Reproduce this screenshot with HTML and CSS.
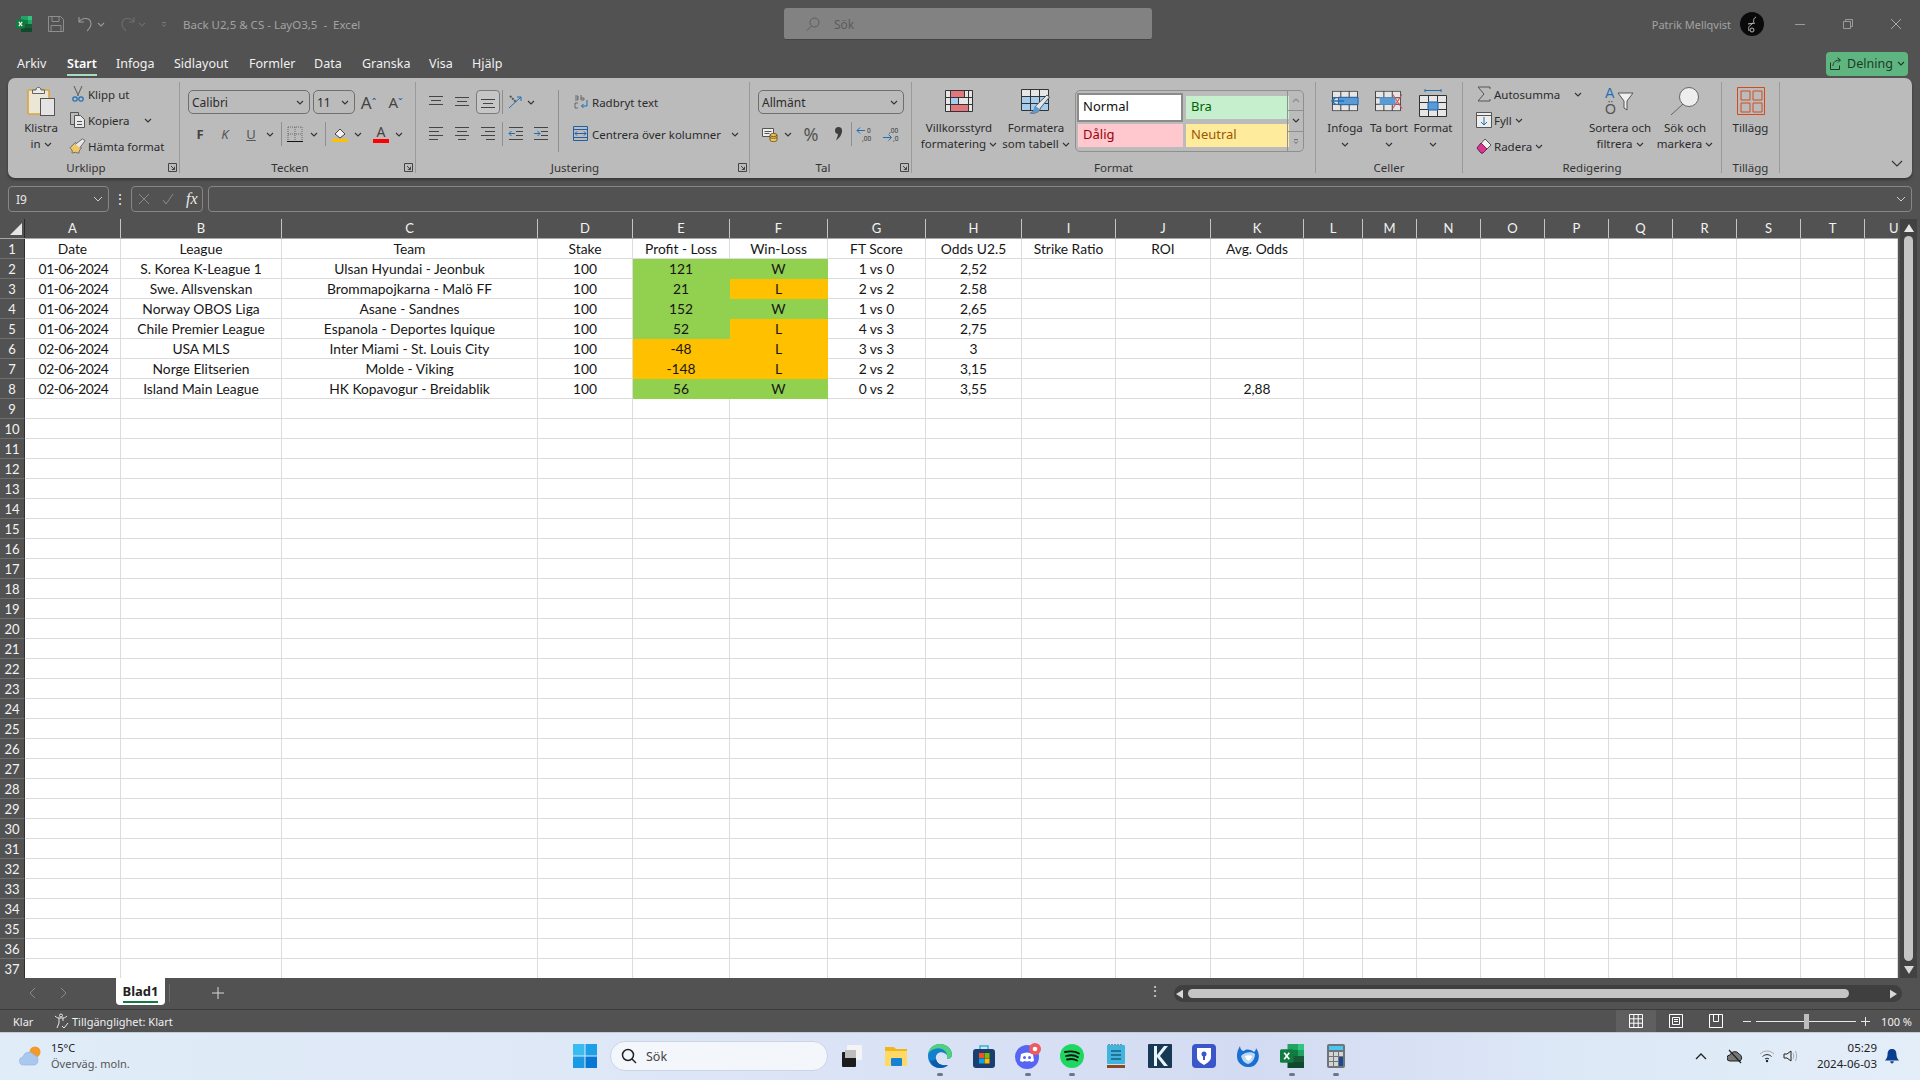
FILE: index.html
```html
<!DOCTYPE html>
<html lang="sv">
<head>
<meta charset="utf-8">
<title>Back U2,5 &amp; CS - LayO3,5 - Excel</title>
<link rel="stylesheet" href="styles.css">
</head>
<body>
<svg class="defs" width="0" height="0">
  <symbol id="ch" viewBox="0 0 8 5"><path d="M1 1l3 3 3-3" fill="none" stroke="currentColor" stroke-width="1.1"/></symbol>
  <symbol id="launch" viewBox="0 0 9 9"><path d="M.5.5h8v8h-8zM3 3l3.5 3.5M6.500 3.800v2.700H3.800" fill="none" stroke="#444"/></symbol>
  <symbol id="xl" viewBox="0 0 16 16"><path fill="#21a366" d="M5 0h7v4H5z"/><path fill="#33c481" d="M12 0h4v4h-4z"/><path fill="#107c41" d="M5 4h7v4H5z"/><path fill="#21a366" d="M12 4h4v4h-4z"/><path fill="#185c37" d="M5 8h11v4H5z"/><path fill="#0f4a2c" d="M5 12h11v4H5z"/><rect x="0" y="3.500" width="9" height="9" rx="1" fill="#107c41"/><path d="M2.800 5.800l3.400 4.400M6.200 5.800l-3.400 4.400" stroke="#fff" stroke-width="1.100"/></symbol>
  <symbol id="ln-top" viewBox="0 0 16 16"><path d="M1 2.500h14M3 6.500h10M1 10.500h14" stroke="#444" fill="none"/></symbol>
  <symbol id="ln-mid" viewBox="0 0 16 16"><path d="M1 3.500h14M3 7.500h10M1 11.500h14" stroke="#444" fill="none"/></symbol>
  <symbol id="ln-bot" viewBox="0 0 16 16"><path d="M1 5.500h14M3 9.500h10M1 13.500h14" stroke="#444" fill="none"/></symbol>
  <symbol id="ln-l" viewBox="0 0 16 16"><path d="M1 1.500h14M1 5.500h10M1 9.500h14M1 13.500h9" stroke="#444" fill="none"/></symbol>
  <symbol id="ln-c" viewBox="0 0 16 16"><path d="M1 1.500h14M3 5.500h10M1 9.500h14M4 13.500h8" stroke="#444" fill="none"/></symbol>
  <symbol id="ln-r" viewBox="0 0 16 16"><path d="M1 1.500h14M5 5.500h10M1 9.500h14M6 13.500h9" stroke="#444" fill="none"/></symbol>
  <symbol id="tbl" viewBox="0 0 28 22"><path d="M.5.5h27v21H.5zM9.500.5v21M18.500.5v21M.5 7.500h27M.5 14.500h27" fill="#e6e6e6" stroke="#333"/></symbol>
</svg>

<div class="app">
  <header class="titlebar">
    <div class="tb-left">
      <svg class="i16" aria-hidden="true"><use href="#xl"/></svg>
      <svg class="i16 ml16" viewBox="0 0 16 16"><path d="M.5.5h12l3 3v12H.5zM4 .5v5h7v-5M3 15.500v-6h10v6" fill="none" stroke="#8e8e8e"/></svg>
      <svg class="i16 ml14" viewBox="0 0 16 16"><path d="M1 1v5h5M1 6c3-5 12-5 12 2 0 3-2 5-4 7" fill="none" stroke="#9a9a9a" stroke-width="1.1"/></svg>
      <svg class="chv ml3 dim"><use href="#ch"/></svg>
      <svg class="i16 ml14" viewBox="0 0 16 16"><path d="M15 1v5h-5M15 6c-3-5-12-5-12 2 0 3 2 5 4 7" fill="none" stroke="#6d6d6d" stroke-width="1.1"/></svg>
      <svg class="chv ml3 dimmer"><use href="#ch"/></svg>
      <svg class="chv ml14 dim" viewBox="0 0 8 8"><path d="M1 1h6M1 4l3 3 3-3" fill="none" stroke="currentColor"/></svg>
      <span class="doc-title">Back U2,5 &amp; CS - LayO3,5&nbsp; -&nbsp; Excel</span>
    </div>
    <div class="search">
      <svg class="i14" viewBox="0 0 14 14"><circle cx="8.500" cy="5.500" r="4.500" fill="none" stroke="#5c5c5c"/><path d="M5.500 9L1 13.500" stroke="#5c5c5c"/></svg>
      <span>Sök</span>
    </div>
    <div class="tb-right">
      <span class="user">Patrik Mellqvist</span>
      <svg class="avatar" viewBox="0 0 24 24"><circle cx="12" cy="12" r="12" fill="#0a0a0a"/><path d="M16 5c-4 2-1 5-4 7s-4 3-3 7M8 12c3-1 5 0 7-1" fill="none" stroke="#bbb"/><circle cx="12" cy="18" r="2" fill="none" stroke="#bbb"/></svg>
      <div class="winbtns">
        <svg class="i12" viewBox="0 0 12 12"><path d="M1 6.500h10" stroke="#9a9a9a"/></svg>
        <svg class="i12" viewBox="0 0 12 12"><path d="M1.500 3.500h7v7h-7zM3.500 3.500v-2h7v7h-2" fill="none" stroke="#9a9a9a"/></svg>
        <svg class="i12" viewBox="0 0 12 12"><path d="M1 1l10 10M11 1L1 11" stroke="#a5a5a5"/></svg>
      </div>
    </div>
  </header>

  <nav class="tabs">
    <span class="tab w50">Arkiv</span><span class="tab w49 active">Start</span><span class="tab w58">Infoga</span><span class="tab w75">Sidlayout</span><span class="tab w65">Formler</span><span class="tab w48">Data</span><span class="tab w67">Granska</span><span class="tab w43">Visa</span><span class="tab">Hjälp</span>
    <button class="share">
      <svg class="i14" viewBox="0 0 14 14"><path d="M1.500 5.500v7h9v-4M4 9c0-4 3-6 7-6M8.500 .8L11.500 3 9 5.500" fill="none" stroke="#1e3a28"/></svg>
      <span>Delning</span>
      <svg class="chv"><use href="#ch"/></svg>
    </button>
  </nav>

  <section class="ribbon">
    <div class="group g-clip">
      <div class="body">
        <div class="big w48">
          <div class="big-ico">
            <svg class="i30" viewBox="0 0 28 30"><rect x="1" y="4" width="21" height="24" rx="1" fill="#ece6d6" stroke="#d9a63a" stroke-width="1.600"/><path d="M5.500 7.500V4h3.500c0-3.500 5-3.500 5 0h3.500v3.500z" fill="#ececec" stroke="#555" stroke-width=".9"/><rect x="13.500" y="12.500" width="14" height="17" fill="#e4e4e4" stroke="#555"/></svg>
          </div>
          <div class="lbl">Klistra</div>
          <div class="lbl">in <svg class="chv"><use href="#ch"/></svg></div>
        </div>
        <div class="small-col ml3">
          <div class="small"><svg class="i20" viewBox="0 0 20 16"><path d="M6 0l4.500 10M14 0L9.500 10" stroke="#666" stroke-width="1.100" fill="none"/><circle cx="7" cy="13" r="2.200" fill="none" stroke="#1f6fb5" stroke-width="1.200"/><circle cx="13" cy="13" r="2.200" fill="none" stroke="#1f6fb5" stroke-width="1.200"/></svg><span>Klipp ut</span></div>
          <div class="small"><svg class="i20" viewBox="0 0 20 16"><path d="M2.500 .5h8v3M2.500 .5v12h4" fill="none" stroke="#555"/><path d="M6.500 3.500h6l4 4v8h-10z" fill="#e8e8e8" stroke="#555"/><path d="M9 9.500h5M9 12.500h5" stroke="#555"/></svg><span>Kopiera</span><svg class="chv ml14"><use href="#ch"/></svg></div>
          <div class="small"><svg class="i20" viewBox="0 0 20 18"><path d="M1 11l6-6 7 6c-2 2-3 4-3 6-2 0-3-1-4-1-2 1-4 1-4 0 1-1 1-2 0-2 0-1-1-2-2-3z" fill="#f0c868" stroke="#555" stroke-width=".9"/><path d="M7 7l8-6 3 2-6 8" fill="#e8e8e8" stroke="#555" stroke-width=".9"/></svg><span>Hämta format</span></div>
        </div>
      </div>
      <div class="glabel lb">Urklipp</div>
      <svg class="launch"><use href="#launch"/></svg>
    </div>

    <div class="group g-font">
      <div class="body column">
        <div class="line">
          <div class="combo w122"><span>Calibri</span><svg class="chv"><use href="#ch"/></svg></div>
          <div class="combo w42 ml3"><span>11</span><svg class="chv"><use href="#ch"/></svg></div>
          <div class="glyph w27 big-a">A<sup>ˆ</sup></div>
          <div class="glyph w27 mid-a">A<sup>ˇ</sup></div>
        </div>
        <div class="line">
          <div class="glyph w24 bold">F</div>
          <div class="glyph w26 ital">K</div>
          <div class="glyph w26 under">U</div>
          <svg class="chv w12"><use href="#ch"/></svg>
          <div class="vsep ml5"></div>
          <div class="glyph w26"><svg class="i16" viewBox="0 0 16 16"><path d="M1 1h14v14M1 1v14M8 1v14M1 8h14" fill="none" stroke="#666" stroke-dasharray="1 1"/><path d="M0 15.500h16" stroke="#111"/></svg></div>
          <svg class="chv w12"><use href="#ch"/></svg>
          <div class="vsep ml5"></div>
          <div class="glyph w28"><svg class="i16" viewBox="0 0 16 16"><path d="M3 8l5-5 5 5-5 4z" fill="#f2f2f2" stroke="#444"/><path d="M0 13h16v3H0z" fill="#ffc000"/></svg></div>
          <svg class="chv w8"><use href="#ch"/></svg>
          <div class="glyph w28 ml5 a-red">A</div>
          <svg class="chv w8"><use href="#ch"/></svg>
        </div>
      </div>
      <div class="glabel lb">Tecken</div>
      <svg class="launch"><use href="#launch"/></svg>
    </div>

    <div class="group g-align">
      <div class="body">
        <div class="column">
          <div class="line">
            <svg class="i16 w24"><use href="#ln-top"/></svg>
            <svg class="i16 w28"><use href="#ln-mid"/></svg>
            <div class="pressed"><svg class="i16"><use href="#ln-bot"/></svg></div>
            <div class="vsep ml2"></div>
            <div class="glyph w24"><svg class="i16" viewBox="0 0 16 16"><path d="M2 14L14 3M14 3h-4M14 3v4" fill="none" stroke="#1f6fb5"/><path d="M3 2l6 6" stroke="#555" stroke-width="2" stroke-dasharray="2 1"/></svg></div>
            <svg class="chv w8"><use href="#ch"/></svg>
          </div>
          <div class="line">
            <svg class="i16 w24"><use href="#ln-l"/></svg>
            <svg class="i16 w28"><use href="#ln-c"/></svg>
            <svg class="i16 w24"><use href="#ln-r"/></svg>
            <div class="vsep ml2"></div>
            <div class="glyph w26"><svg class="i16" viewBox="0 0 16 16"><path d="M1 1.500h14M8 5.500h7M8 9.500h7M1 13.500h14" stroke="#444"/><path d="M7 7.500H1M3.500 5L1 7.500 3.500 10" fill="none" stroke="#1f6fb5"/></svg></div>
            <div class="glyph w24"><svg class="i16" viewBox="0 0 16 16"><path d="M1 1.500h14M8 5.500h7M8 9.500h7M1 13.500h14" stroke="#444"/><path d="M1 7.500h6M4.500 5L7 7.500 4.500 10" fill="none" stroke="#1f6fb5"/></svg></div>
          </div>
        </div>
        <div class="vsep tall ml5"></div>
        <div class="column">
          <div class="line wrap-row"><svg class="i16 w22" viewBox="0 0 16 16"><path d="M2 2h3v4M2 4h3M2 6h3M8 1v5h3V4H8" fill="none" stroke="#555" stroke-width=".8"/><path d="M5 9H2v5h3" fill="none" stroke="#555" stroke-width=".8"/><path d="M14 6v6H8.500M10.500 10l-2 2 2 2" fill="none" stroke="#1f6fb5"/></svg><span>Radbryt text</span></div>
          <div class="line wrap-row"><svg class="i16 w22" viewBox="0 0 16 16"><path d="M.5 .5h14v14H.5zM.5 3.500h14M.5 11.500h14" fill="none" stroke="#1f5fa8"/><path d="M2 7.500h11M4 5.500l-2 2 2 2M11 5.500l2 2-2 2" fill="none" stroke="#1f5fa8"/></svg><span>Centrera över kolumner</span><svg class="chv push"><use href="#ch"/></svg></div>
        </div>
      </div>
      <div class="glabel lb">Justering</div>
      <svg class="launch"><use href="#launch"/></svg>
    </div>

    <div class="group g-num">
      <div class="body column">
        <div class="line"><div class="combo w146"><span>Allmänt</span><svg class="chv"><use href="#ch"/></svg></div></div>
        <div class="line">
          <div class="glyph w24"><svg class="i16" viewBox="0 0 16 16"><path d="M.5 2.500h11v8H.5z" fill="#eee" stroke="#555"/><path d="M2.500 5.500h7M2.500 7.500h5" stroke="#555"/><path d="M8 9v5c0 2 7 2 7 0V9" fill="#f0c868" stroke="#7a5a14"/><ellipse cx="11.500" cy="9" rx="3.500" ry="1.500" fill="#f0c868" stroke="#7a5a14"/><path d="M8 11.500c1 1 6 1 7 0" fill="none" stroke="#7a5a14"/></svg></div>
          <svg class="chv w12"><use href="#ch"/></svg>
          <div class="glyph w34 pct">%</div>
          <div class="glyph w20"><svg class="i16" viewBox="0 0 16 16"><circle cx="8.500" cy="4.500" r="3.500" fill="#3f3f3f"/><path d="M12 4.500c0 4-2 7-6 10 1-3 2-5 2-7z" fill="#3f3f3f"/></svg></div>
          <div class="vsep ml3"></div>
          <div class="glyph w28 dec"><svg class="i20" viewBox="0 0 20 16"><path d="M9 4.500H1M4 1.500l-3 3 3 3" fill="none" stroke="#1f6fb5"/><text x="11" y="7" class="svg-num">0</text><text x="6" y="14.500" class="svg-num">,00</text></svg></div>
          <div class="glyph w24 dec"><svg class="i20" viewBox="0 0 20 16"><text x="7" y="7" class="svg-num">,00</text><path d="M1 11.500h8M6.500 8.500l3 3-3 3" fill="none" stroke="#1f6fb5"/><text x="11" y="14.500" class="svg-num">,0</text></svg></div>
        </div>
      </div>
      <div class="glabel lb">Tal</div>
      <svg class="launch"><use href="#launch"/></svg>
    </div>

    <div class="group g-style">
      <div class="body">
        <div class="big w84">
          <div class="big-ico">
            <svg class="i28h" viewBox="0 0 28 22"><path d="M.5.5h27v21H.5z" fill="#e6e6e6"/><path d="M5 1h14v6H5zM5 15h18v6H5z" fill="#e2777c"/><path d="M5 8h8v6H5z" fill="#a7cdee"/><path d="M.5.500h27v21H.5zM5.500.5v21M13.500 7.500v7M19.500.5v7M23.500.5v21M.5 7.500h27M.5 14.500h27" fill="none" stroke="#333"/></svg>
          </div>
          <div class="lbl">Villkorsstyrd</div>
          <div class="lbl">formatering <svg class="chv"><use href="#ch"/></svg></div>
        </div>
        <div class="big w70">
          <div class="big-ico">
            <svg class="i28h tall-ico" viewBox="0 0 30 28"><path d="M.5.500h27v21H.5z" fill="#e6e6e6"/><path d="M.5 7.500h27v14H.5z" fill="#a7cdee"/><path d="M.5.500h27v21H.5zM9.500.5v21M18.500.5v21M.5 7.500h27M.5 14.500h27" fill="none" stroke="#333"/><path d="M26 6l2.500 2-9 11c-1 4-6 6-10 5 3-1 4-3 5-7z" fill="#dfe6ec" stroke="#555"/><path d="M14.500 17l4 3c-1 3-6 5-9.500 4 3-1 4-3 5.500-7z" fill="#5b9bd5"/></svg>
          </div>
          <div class="lbl">Formatera</div>
          <div class="lbl">som tabell <svg class="chv"><use href="#ch"/></svg></div>
        </div>
        <div class="gallery">
          <div class="styles">
            <div class="st st-normal">Normal</div>
            <div class="st st-good">Bra</div>
            <div class="st st-bad">Dålig</div>
            <div class="st st-neutral">Neutral</div>
          </div>
          <div class="scroller">
            <div class="sc"><svg class="chv flip dim2"><use href="#ch"/></svg></div>
            <div class="sc"><svg class="chv"><use href="#ch"/></svg></div>
            <div class="sc"><svg class="chv" viewBox="0 0 8 8"><path d="M1 1h6M1 4l3 3 3-3" fill="none" stroke="currentColor"/></svg></div>
          </div>
        </div>
      </div>
      <div class="glabel">Format</div>
    </div>

    <div class="group g-cell">
      <div class="body">
        <div class="big w44">
          <div class="big-ico"><svg class="i28h" viewBox="0 0 30 22"><use href="#tbl" width="28" height="22" x="1"/><path d="M8 7h21v8H8z" fill="#5b9bd5" stroke="#1f5fa8"/><path d="M14 11H1M5 7l-4 4 4 4" fill="none" stroke="#1f6fb5" stroke-width="1.500"/></svg></div>
          <div class="lbl">Infoga</div>
          <div class="lbl"><svg class="chv"><use href="#ch"/></svg></div>
        </div>
        <div class="big w44">
          <div class="big-ico"><svg class="i28h" viewBox="0 0 30 22"><use href="#tbl" width="28" height="22"/><path d="M5 7h17v8H5z" fill="#5b9bd5"/><path d="M19 4l10 15M29 4L19 19" stroke="#d8555a" stroke-width="1.200"/></svg></div>
          <div class="lbl">Ta bort</div>
          <div class="lbl"><svg class="chv"><use href="#ch"/></svg></div>
        </div>
        <div class="big w44">
          <div class="big-ico"><svg class="i28h tall-ico" viewBox="0 0 28 28"><path d="M6 1.500h16M6 0v3M22 0v3" stroke="#1f6fb5"/><use href="#tbl" width="28" height="22" y="6"/><path d="M9 13h10v8H9z" fill="#5b9bd5" stroke="#1f5fa8"/></svg></div>
          <div class="lbl">Format</div>
          <div class="lbl"><svg class="chv"><use href="#ch"/></svg></div>
        </div>
      </div>
      <div class="glabel">Celler</div>
    </div>

    <div class="group g-edit">
      <div class="body">
        <div class="small-col w111">
          <div class="small"><svg class="i20" viewBox="0 0 14 16"><path d="M13 3V1H1l6 7-6 7h12v-2" fill="none" stroke="#555"/></svg><span>Autosumma</span><svg class="chv push mr3"><use href="#ch"/></svg></div>
          <div class="small"><svg class="i20" viewBox="0 0 16 16"><path d="M.5 .5h15v15H.5z" fill="#eee" stroke="#555"/><path d="M.5 3.500h15" stroke="#555"/><path d="M8 5v8M5 10l3 3 3-3" fill="none" stroke="#1f6fb5"/></svg><span>Fyll</span><svg class="chv ml3"><use href="#ch"/></svg></div>
          <div class="small"><svg class="i20" viewBox="0 0 16 16"><path d="M1 10l8-9 6 6-8 8H5z" fill="#f2f2f2" stroke="#555"/><path d="M1 10l4-5 6 6-4 4H5z" fill="#d6388f" stroke="#8a1a5c"/></svg><span>Radera</span><svg class="chv ml3"><use href="#ch"/></svg></div>
        </div>
        <div class="big w70">
          <div class="big-ico"><svg class="i30t" viewBox="0 0 30 32"><text x="0" y="13" class="svg-sort a-blue">A</text><text x="0" y="29" class="svg-sort">Ö</text><path d="M13 8h15l-6 8v9l-3-2v-7z" fill="#f0f0f0" stroke="#555"/></svg></div>
          <div class="lbl">Sortera och</div>
          <div class="lbl">filtrera <svg class="chv"><use href="#ch"/></svg></div>
        </div>
        <div class="big w60">
          <div class="big-ico"><svg class="i30" viewBox="0 0 30 30"><circle cx="19" cy="11" r="9.500" fill="#eee" stroke="#666"/><path d="M13 18L1 29" stroke="#666"/></svg></div>
          <div class="lbl">Sök och</div>
          <div class="lbl">markera <svg class="chv"><use href="#ch"/></svg></div>
        </div>
      </div>
      <div class="glabel">Redigering</div>
    </div>

    <div class="group g-add">
      <div class="body">
        <div class="big wfull">
          <div class="big-ico"><svg class="i28" viewBox="0 0 28 28"><path d="M.5.500h27v27H.5z" fill="none" stroke="#d24a1e"/><path d="M4 4h9v9H4zM16 4h9v9h-9zM4 16h9v9H4zM16 16h9v9h-9z" fill="none" stroke="#d24a1e"/></svg></div>
          <div class="lbl">Tillägg</div>
        </div>
      </div>
      <div class="glabel">Tillägg</div>
    </div>
    <svg class="collapse" viewBox="0 0 12 7"><path d="M1 1l5 5 5-5" fill="none" stroke="#333" stroke-width="1.100"/></svg>
  </section>

  <div class="formula">
    <div class="namebox"><span>I9</span><svg class="chv2" viewBox="0 0 10 6"><path d="M1 1l4 4 4-4" fill="none" stroke="#cfcfcf"/></svg></div>
    <div class="dots">⋮</div>
    <div class="fx-box">
      <svg class="i12" viewBox="0 0 12 12"><path d="M1 1l10 10M11 1L1 11" stroke="#8a8a8a"/></svg>
      <svg class="i12" viewBox="0 0 12 12"><path d="M1 7l3 4 7-10" fill="none" stroke="#8a8a8a"/></svg>
      <span class="fx">fx</span>
    </div>
    <div class="input"><svg class="chv2" viewBox="0 0 10 6"><path d="M1 1l4 4 4-4" fill="none" stroke="#cfcfcf"/></svg></div>
  </div>

  <main class="sheet">
    <div class="gridwrap">
      <div class="colhead">
        <div class="corner"><svg class="i12" viewBox="0 0 12 12"><path d="M12 0v12H0z" fill="#e6e6e6"/></svg></div>
        <div>A</div><div>B</div><div>C</div><div>D</div><div>E</div><div>F</div><div>G</div><div>H</div><div>I</div><div>J</div><div>K</div><div>L</div><div>M</div><div>N</div><div>O</div><div>P</div><div>Q</div><div>R</div><div>S</div><div>T</div><div class="clip">U</div>
      </div>
      <div class="gridbody">
        <div class="rownums">
          <div>1</div><div>2</div><div>3</div><div>4</div><div>5</div><div>6</div><div>7</div><div>8</div><div>9</div><div>10</div><div>11</div><div>12</div><div>13</div><div>14</div><div>15</div><div>16</div><div>17</div><div>18</div><div>19</div><div>20</div><div>21</div><div>22</div><div>23</div><div>24</div><div>25</div><div>26</div><div>27</div><div>28</div><div>29</div><div>30</div><div>31</div><div>32</div><div>33</div><div>34</div><div>35</div><div>36</div><div>37</div>
        </div>
        <div class="cells">
          <div>Date</div><div>League</div><div>Team</div><div>Stake</div><div>Profit - Loss</div><div>Win-Loss</div><div>FT Score</div><div>Odds U2.5</div><div>Strike Ratio</div><div>ROI</div><div>Avg. Odds</div>
          <div class="strip"></div><div class="strip"></div><div class="strip"></div><div class="strip"></div><div class="strip"></div><div class="strip"></div><div class="strip"></div><div class="strip"></div><div class="strip"></div><div class="strip"></div>

          <div class="num">01-06-2024</div><div>S. Korea K-League 1</div><div>Ulsan Hyundai - Jeonbuk</div><div>100</div><div class="green">121</div><div class="green">W</div><div>1 vs 0</div><div>2,52</div><div></div><div></div><div></div>
          <div class="num">01-06-2024</div><div>Swe. Allsvenskan</div><div>Brommapojkarna - Malö FF</div><div>100</div><div class="green">21</div><div class="amber">L</div><div>2 vs 2</div><div>2.58</div><div></div><div></div><div></div>
          <div class="num">01-06-2024</div><div>Norway OBOS Liga</div><div>Asane - Sandnes</div><div>100</div><div class="green">152</div><div class="green">W</div><div>1 vs 0</div><div>2,65</div><div></div><div></div><div></div>
          <div class="num">01-06-2024</div><div>Chile Premier League</div><div>Espanola - Deportes Iquique</div><div>100</div><div class="green">52</div><div class="amber">L</div><div>4 vs 3</div><div>2,75</div><div></div><div></div><div></div>
          <div class="num">02-06-2024</div><div>USA MLS</div><div>Inter Miami - St. Louis City</div><div>100</div><div class="amber">-48</div><div class="amber">L</div><div>3 vs 3</div><div>3</div><div></div><div></div><div></div>
          <div class="num">02-06-2024</div><div>Norge Elitserien</div><div>Molde - Viking</div><div>100</div><div class="amber">-148</div><div class="amber">L</div><div>2 vs 2</div><div>3,15</div><div></div><div></div><div></div>
          <div class="num">02-06-2024</div><div>Island Main League</div><div>HK Kopavogur - Breidablik</div><div>100</div><div class="green">56</div><div class="green">W</div><div>0 vs 2</div><div>3,55</div><div></div><div></div><div>2,88</div>

          <div class="rest"></div><div class="rest"></div><div class="rest"></div><div class="rest"></div><div class="rest"></div><div class="rest"></div><div class="rest"></div><div class="rest"></div><div class="rest"></div><div class="rest"></div><div class="rest"></div>
        </div>
      </div>
    </div>
    <div class="vscroll">
      <svg class="arrow" viewBox="0 0 10 8"><path d="M5 0l5 8H0z" fill="#e6e6e6"/></svg>
      <div class="vthumb"></div>
      <svg class="arrow" viewBox="0 0 10 8"><path d="M5 8l5-8H0z" fill="#d8d8d8"/></svg>
    </div>
  </main>

  <div class="sheetbar">
    <svg class="navarrow" viewBox="0 0 8 12"><path d="M7 1L2 6l5 5" fill="none" stroke="#8a8a8a"/></svg>
    <svg class="navarrow ml24" viewBox="0 0 8 12"><path d="M1 1l5 5-5 5" fill="none" stroke="#8a8a8a"/></svg>
    <div class="sheettab"><span>Blad1</span></div>
    <div class="tabsep"></div>
    <svg class="plus" viewBox="0 0 12 12"><path d="M6 0v12M0 6h12" stroke="#d8d8d8"/></svg>
    <div class="tabdots">⋮</div>
    <div class="hscroll">
      <svg class="harrow" viewBox="0 0 8 10"><path d="M0 5l8-5v10z" fill="#d8d8d8"/></svg>
      <div class="hthumb"></div>
      <svg class="harrow" viewBox="0 0 8 10"><path d="M8 5L0 0v10z" fill="#d8d8d8"/></svg>
    </div>
  </div>

  <footer class="status">
    <span class="ready">Klar</span>
    <svg class="i16 access" viewBox="0 0 16 16"><circle cx="7" cy="2.500" r="1.500" fill="none" stroke="#e8e8e8"/><path d="M1 3c2 2 3 2 6 2s4 0 6-2M5 5v5l-2 5M9 5v3M8 13l2 2 4-5" fill="none" stroke="#e8e8e8"/></svg>
    <span class="access-text">Tillgänglighet: Klart</span>
    <div class="status-right">
      <div class="view on"><svg class="i14" viewBox="0 0 14 14"><path d="M.5.500h13v13H.5zM4.800.5v13M9.200.5v13M.5 4.800h13M.5 9.200h13" fill="none" stroke="#fff"/></svg></div>
      <div class="view"><svg class="i14" viewBox="0 0 14 14"><path d="M.5.500h13v13H.5zM3.500 3.500h7v7h-7zM5 5.500h4M5 7.500h4" fill="none" stroke="#fff"/></svg></div>
      <div class="view"><svg class="i14" viewBox="0 0 14 14"><path d="M.5.500h13v13H.5zM4.500.5v7h5v-7" fill="none" stroke="#fff"/></svg></div>
      <svg class="zoombtn" viewBox="0 0 9 9"><path d="M0 4.500h8" stroke="#e8e8e8"/></svg>
      <div class="slider"><div class="knob"></div></div>
      <svg class="zoombtn plus-z" viewBox="0 0 9 9"><path d="M0 4.500h9M4.500 0v9" stroke="#e8e8e8"/></svg>
      <span class="zoomval">100 %</span>
    </div>
  </footer>

  <footer class="taskbar">
    <div class="weather">
      <svg class="i24" viewBox="0 0 24 22"><circle cx="16" cy="7" r="5.500" fill="#f49a2a"/><path d="M5 20a4 4 0 0 1-1-8 6 6 0 0 1 11-2 5 5 0 0 1 4 5 5 5 0 0 1-3 5z" fill="#a9c8ee" stroke="#8eb2e0" stroke-width=".6"/></svg>
      <div class="wtext"><div>15°C</div><div class="wsub">Överväg. moln.</div></div>
    </div>
    <svg class="winlogo" viewBox="0 0 24 24"><path d="M0 0h11.500v11.500H0z" fill="#39bdf0"/><path d="M12.500 0H24v11.500H12.500z" fill="#1ea0e8"/><path d="M0 12.500h11.500V24H0z" fill="#1a9ae4"/><path d="M12.500 12.500H24V24H12.500z" fill="#0678d4"/></svg>
    <div class="tsearch">
      <svg class="i16" viewBox="0 0 16 16"><circle cx="7" cy="7" r="5.500" fill="none" stroke="#222" stroke-width="1.500"/><path d="M11 11l4 4" stroke="#222" stroke-width="1.500"/></svg>
      <span>Sök</span>
    </div>
    <div class="apps">
      <div class="app-i"><svg class="i24" viewBox="0 0 24 24"><rect x="7" y="1" width="15" height="15" fill="#f4f4f4"/><rect x="2" y="8" width="14" height="15" rx="1" fill="#1c1c1c"/><rect x="5" y="6" width="11" height="8" fill="#bdbdbd"/></svg></div>
      <div class="app-i"><svg class="i24" viewBox="0 0 24 24"><path d="M1 3h9l2 2h11v16a1 1 0 0 1-1 1H2a1 1 0 0 1-1-1z" fill="#f3b51c"/><path d="M1 7h22v15H1z" fill="#ffd965"/><rect x="7" y="14" width="11" height="8" rx="1" fill="#1582d8"/></svg></div>
      <div class="app-i dot"><svg class="i24" viewBox="0 0 24 24"><path d="M12 0C5 0 0 5.500 0 12c0 7 5 12 12 12 3 0 6-1 8-3-4 1-11 0-12-6-1-5 4-8 8-6 3 1 4 3 3 6 3 0 5-2 5-4C24 5 19 0 12 0z" fill="#1380cf"/><path d="M12 0C6 0 1 4 0 10c3-5 9-7 14-5 4 2 6 5 5 10 3 0 5-2 5-4C24 5 19 0 12 0z" fill="#4fd17e"/><path d="M8 15c1 6 8 7 12 6-1 1-4 3-8 3-5 0-9-3-10-8 1 1 4 1 6-1z" fill="#0c5ba8"/></svg></div>
      <div class="app-i"><svg class="i24" viewBox="0 0 24 24"><path d="M8 6V2h8v4" fill="none" stroke="#2db5d8" stroke-width="1.500"/><rect x="1" y="5" width="22" height="19" rx="3" fill="#1a3f6e"/><path d="M7 9h5v5H7z" fill="#f25022"/><path d="M12.500 9h5v5h-5z" fill="#7fba00"/><path d="M7 14.500h5v5H7z" fill="#00a4ef"/><path d="M12.500 14.500h5v5h-5z" fill="#ffb900"/></svg></div>
      <div class="app-i dot"><svg class="i26" viewBox="0 0 26 26"><circle cx="12" cy="14" r="12" fill="#5865f2"/><path d="M6 11c4-2 8-2 12 0l1 7-3 1-1-1c-2 .6-4 .6-6 0l-1 1-3-1z" fill="#fff"/><circle cx="9.500" cy="14.500" r="1.500" fill="#5865f2"/><circle cx="14.500" cy="14.500" r="1.500" fill="#5865f2"/><circle cx="20" cy="6" r="6" fill="#ee5a5f"/><circle cx="20" cy="6" r="2.300" fill="#fff"/></svg></div>
      <div class="app-i dot"><svg class="i24" viewBox="0 0 24 24"><circle cx="12" cy="12" r="12" fill="#1ed760"/><path d="M5 8c5-1 10-1 14 1.500M6 12c4-1 9-1 12 1.200M7 15.500c3-.7 7-.7 10 1" fill="none" stroke="#111" stroke-width="1.800" stroke-linecap="round"/></svg></div>
      <div class="app-i"><svg class="i24" viewBox="0 0 24 24"><rect x="3" y="1" width="18" height="19" rx="1" fill="#3fb4dc"/><path d="M7 7h10M7 11h10M7 15h10" stroke="#1a5c82" stroke-width="1.600"/><path d="M5 1V0M8 1V0M11 1V0M14 1V0M17 1V0" stroke="#333"/><rect x="3" y="21" width="18" height="3" fill="#8a4a22"/></svg></div>
      <div class="app-i"><svg class="i24" viewBox="0 0 24 24"><rect width="24" height="24" rx="1" fill="#163a55"/><path d="M6 2h3v9l7-9h4l-8 10 8 10h-4l-7-9v9H6z" fill="#e8f4f8"/></svg></div>
      <div class="app-i"><svg class="i24" viewBox="0 0 24 24"><rect width="24" height="24" rx="4" fill="#3a56c8"/><path d="M5 4h14v9c0 4-4 6-7 8-3-2-7-4-7-8z" fill="#fff"/><circle cx="12" cy="10" r="2.500" fill="#3a56c8"/><path d="M11 11h2v5h-2z" fill="#3a56c8"/></svg></div>
      <div class="app-i"><svg class="i24" viewBox="0 0 24 24"><path d="M4 2C1 7 0 12 2 17c3 6 12 8 17 4 5-4 5-12 1-17 0 2-1 3-2 4-4-3-8-3-10-1C6 7 4 5 4 2z" fill="#1a6fd0"/><path d="M5 12c3-4 11-5 14-2 0 5-3 9-7 10-4-1-6-4-7-8z" fill="#b8d8f4"/><path d="M9 12c2-1 5-1 7 0 0 2-2 4-3.500 5C11 16 9 14 9 12z" fill="#fff"/></svg></div>
      <div class="app-i dot"><svg class="i24" viewBox="0 0 24 24"><use href="#xl"/></svg></div>
      <div class="app-i dot"><svg class="i24" viewBox="0 0 18 24"><rect width="18" height="24" rx="2" fill="#6e7478"/><rect x="2" y="2" width="14" height="4" fill="#46c8f0"/><path d="M2 8h4v4H2zM7 8h4v4H7zM12 8h4v4h-4zM2 13h4v4H2zM7 13h4v4H7zM2 18h4v4H2zM7 18h4v4H7z" fill="#d4d4d4"/><rect x="12" y="13" width="4" height="9" fill="#1a4a8e"/></svg></div>
    </div>
    <div class="tray">
      <svg class="i12" viewBox="0 0 12 8"><path d="M1 7l5-5 5 5" fill="none" stroke="#222" stroke-width="1.300"/></svg>
      <svg class="i16 ml20" viewBox="0 0 16 16"><path d="M3 13a3 3 0 0 1 0-6 5 5 0 0 1 9-1 4 4 0 0 1 1 7z" fill="#777" stroke="#222"/><path d="M2 2l12 13" stroke="#222" stroke-width="1.200"/></svg>
      <svg class="i16 ml16" viewBox="0 0 16 14"><path d="M1 5c4-4 10-4 14 0" fill="none" stroke="#a8a8a8"/><path d="M3.500 7.500c3-2.500 6-2.500 9 0M6 10c1.500-1 2.500-1 4 0" fill="none" stroke="#222"/><circle cx="8" cy="12" r="1.200" fill="#222"/></svg>
      <svg class="i16 ml8" viewBox="0 0 16 14"><path d="M1 5h3l4-3v10L4 9H1z" fill="none" stroke="#222"/><path d="M10 4c1 2 1 4 0 6M12.500 2c1.500 3 1.500 7 0 10" fill="none" stroke="#a8a8a8"/></svg>
      <div class="clock"><div>05:29</div><div>2024-06-03</div></div>
      <svg class="i16 ml7" viewBox="0 0 16 18"><path d="M8 1c4 0 5 3 5 6 0 3 1 5 3 7H0c2-2 3-4 3-7 0-3 1-6 5-6z" fill="#0b3d91"/><path d="M6 15h4c0 1.500-1 2.500-2 2.500S6 16.500 6 15z" fill="#0b3d91"/></svg>
    </div>
  </footer>
</div>
</body>
</html>
```

FILE: styles.css
```css
:root {
  --cols: 96px 161px 256px 95px 97px 98px 98px 96px 94px 95px 93px 59px 54px 64px 64px 64px 64px 64px 64px 64px 33px;
  --ui: "Noto Sans", "Open Sans", sans-serif;
  --cell: Lato, "Liberation Sans", sans-serif;
  --chrome: #525252;
  --ink: #2b2b2b;
}
* { box-sizing: border-box; }
html, body { margin: 0; height: 100%; }
body { font-family: var(--ui); font-size: 11.5px; color: var(--ink); background: var(--chrome); overflow: hidden; }
svg { display: block; flex: none; }
.defs { position: absolute; }
.svg-num { font: 6.5px var(--ui); fill: #333; }
.svg-sort { font: 14px "Liberation Sans", sans-serif; fill: #555; }
.svg-sort.a-blue { fill: #1f6fb5; }

.app { width: 1920px; height: 1080px; display: flex; flex-direction: column; }

/* sizes */
.i12 { width: 12px; height: 12px; }
.i14 { width: 14px; height: 14px; }
.i16 { width: 16px; height: 16px; }
.i20 { width: 20px; height: 16px; }
.i24 { width: 24px; height: 24px; }
.i26 { width: 26px; height: 26px; }
.i28 { width: 28px; height: 28px; }
.i28h { width: 28px; height: 22px; }
.tall-ico { width: 30px; height: 28px; margin-top: 3px; }
.i30 { width: 30px; height: 30px; }
.i30t { width: 30px; height: 32px; }
.chv { width: 8px; height: 5px; color: #333; }
.chv.w12 { width: 12px; }
.chv.w8 { width: 8px; }
.dim { color: #9a9a9a; }
.dimmer { color: #6d6d6d; }
.dim2 { color: #8a8a8a; }
.flip { transform: rotate(180deg); }
.ml2 { margin-left: 2px; } .ml3 { margin-left: 3px; } .ml5 { margin-left: 5px; } .ml7 { margin-left: 7px; }
.ml8 { margin-left: 8px; } .ml14 { margin-left: 14px; } .ml16 { margin-left: 16px; } .ml20 { margin-left: 20px; } .ml24 { margin-left: 24px; }
.mr3 { margin-right: 3px; }
.push { margin-left: auto; }
.w8 { width: 8px; } .w12 { width: 12px; } .w20 { width: 20px; } .w22 { width: 22px; } .w24 { width: 24px; } .w26 { width: 26px; }
.w27 { width: 27px; } .w28 { width: 28px; } .w34 { width: 34px; } .w42 { width: 42px; } .w44 { width: 44px; } .w48 { width: 48px; }
.w60 { width: 60px; } .w70 { width: 70px; } .w84 { width: 84px; } .w111 { width: 111px; } .w122 { width: 122px; } .w146 { width: 146px; }
.wfull { width: 100%; }

/* title bar */
.titlebar { height: 48px; display: flex; align-items: center; flex: none; }
.tb-left { width: 784px; padding-left: 16px; display: flex; align-items: center; }
.doc-title { margin-left: 15px; color: #a3a3a3; font-size: 11.5px; white-space: nowrap; }
.search { width: 368px; height: 32px; background: #828282; border-radius: 3px; border-bottom: 1px solid #444; display: flex; align-items: center; padding: 1px 0 0 22px; gap: 14px; color: #5c5c5c; font-size: 12px; }
.tb-right { flex: 1; display: flex; align-items: center; justify-content: flex-end; }
.user { color: #a3a3a3; font-size: 11px; }
.avatar { width: 24px; height: 24px; margin-left: 9px; }
.winbtns { display: flex; align-items: center; gap: 36px; margin-left: 30px; padding-right: 18px; }

/* tabs */
.tabs { height: 30px; flex: none; display: flex; align-items: center; padding: 1px 0 0 17px; color: #f0f0f0; font-size: 12.5px; position: relative; }
.tab { display: block; line-height: 29px; }
.w50 { width: 50px; } .w49 { width: 49px; } .w58 { width: 58px; } .w75 { width: 75px; } .w65 { width: 65px; } .w43 { width: 43px; } .w67 { width: 67px; }
.active { font-weight: 600; position: relative; color: #fff; }
.active::after { content: ""; position: absolute; left: 0; width: 30px; bottom: 2px; height: 2px; background: #a9dcc0; }
.share { margin-left: auto; margin-right: 12px; margin-top: 0; width: 82px; height: 24px; background: #5fb57f; color: #1e3a28; border: 0; border-radius: 4px; font: 12.5px var(--ui); display: flex; align-items: center; justify-content: center; gap: 4px; padding: 0; }
.share .chv { color: #1e3a28; }

/* ribbon */
.ribbon { height: 100px; margin: 0 8px; flex: none; background: #bbbbbb; border-radius: 7px; display: flex; position: relative; box-shadow: 0 2px 3px rgba(0,0,0,.35); }
.group { height: 91px; margin-top: 4px; border-right: 1px solid #9a9a9a; position: relative; flex: none; display: flex; flex-direction: column; }
.g-clip { width: 172px; } .g-font { width: 236px; } .g-align { width: 334px; } .g-num { width: 162px; }
.g-style { width: 404px; } .g-cell { width: 147px; } .g-edit { width: 259px; } .g-add { width: 58px; }
.body { height: 78px; display: flex; flex: none; }
.glabel { text-align: center; line-height: 16px; font-size: 11.5px; color: #333; height: 13px; }
.glabel.lb { padding-right: 15px; }
.launch { position: absolute; right: 2px; bottom: 1px; width: 9px; height: 9px; }
.collapse { position: absolute; right: 9px; bottom: 11px; width: 12px; height: 7px; }

.big { display: flex; flex-direction: column; align-items: center; flex: none; }
.big-ico { height: 38px; display: flex; align-items: center; justify-content: center; }
.lbl { height: 16px; line-height: 16px; white-space: nowrap; display: flex; align-items: center; gap: 3px; }
.small-col { display: flex; flex-direction: column; flex: none; margin-top: -1px; }
.small { height: 26px; display: flex; align-items: center; white-space: nowrap; }

.column { display: flex; flex-direction: column; gap: 8px; padding-top: 8px; }
.line { height: 24px; display: flex; align-items: center; flex: none; }
.glyph { display: flex; align-items: center; justify-content: center; height: 24px; flex: none; }
.combo { height: 24px; border: 1px solid #6f6f6f; border-radius: 5px; display: flex; align-items: center; justify-content: space-between; padding: 0 5px 0 3px; font-size: 12px; flex: none; }
.vsep { width: 1px; height: 24px; background: #8f8f8f; flex: none; }
.vsep.tall { height: 62px; margin-top: 8px; }
.pressed { width: 24px; height: 24px; border: 1px solid #7a7a7a; border-radius: 4px; background: #c6c6c6; display: flex; align-items: center; justify-content: center; flex: none; }
.wrap-row { font-size: 11.5px; white-space: nowrap; padding-left: 11px; }
.wrap-row:last-child { width: 180px; }

.g-clip .body { padding-left: 9px; }
.g-font .body { padding-left: 8px; }
.g-align .body { padding-left: 8px; }
.g-num .body { padding-left: 8px; }
.g-style .body { padding-left: 5px; }
.g-cell .body { padding-left: 7px; }
.g-edit .body { padding-left: 11px; }

.big-a { font-size: 17px; color: #444; }
.mid-a { font-size: 15px; color: #444; }
.big-a sup, .mid-a sup { font-size: 11px; line-height: 1; color: #1f5fa8; }
.bold { font-weight: 700; font-size: 13px; color: #444; }
.ital { font-style: italic; font-size: 13px; color: #555; }
.under { text-decoration: underline; font-size: 13px; color: #555; }
.a-red { font-size: 14px; color: #444; border-bottom: 4px solid #f00; width: 16px; height: 18px; margin-left: 11px; margin-right: 6px; line-height: 14px; }
.pct { font-size: 18px; color: #555; }

.gallery { width: 229px; height: 62px; margin: 8px 0 0 4px; border: 1px solid #8f8f8f; border-radius: 5px; display: flex; flex: none; }
.styles { width: 211px; display: grid; grid-template-columns: 105px 103px; column-gap: 3px; grid-template-rows: 27px 27px; padding: 3px 0 0 2px; row-gap: 1px; }
.st { font-size: 13px; line-height: 20px; display: flex; align-items: flex-start; padding-left: 5px; margin: 2px 0; }
.st-normal { background: #fff; color: #111; outline: 2px solid #8b8b8b; outline-offset: -1px; margin: 0 1px 0 0; padding-top: 2px; }
.st-good { background: #c6efce; color: #006100; }
.st-bad { background: #ffc7ce; color: #9c0006; }
.st-neutral { background: #ffeb9c; color: #9c5700; }
.scroller { flex: 1; display: flex; flex-direction: column; border-left: 1px solid #8f8f8f; }
.sc { flex: 1; display: flex; align-items: center; justify-content: center; border-bottom: 1px solid #8f8f8f; }
.sc:last-child { border-bottom: 0; }

/* formula bar */
.formula { height: 26px; margin: 8px 8px 7px; flex: none; display: flex; align-items: stretch; color: #e8e8e8; font-size: 12px; }
.namebox { width: 101px; border: 1px solid #868686; border-radius: 4px; display: flex; align-items: center; justify-content: space-between; padding: 0 5px 0 7px; }
.chv2 { width: 10px; height: 6px; }
.dots { width: 22px; text-align: center; line-height: 26px; font-size: 14px; }
.fx-box { width: 72px; border: 1px solid #868686; border-radius: 4px; display: flex; align-items: center; gap: 12px; padding-left: 6px; }
.fx { font: italic 16px "Liberation Serif", serif; color: #e8e8e8; }
.input { flex: 1; margin-left: 5px; border: 1px solid #868686; border-radius: 4px; display: flex; align-items: center; justify-content: flex-end; padding-right: 5px; }

/* sheet */
.sheet { height: 759px; flex: none; display: flex; }
.gridwrap { width: 1898px; overflow: hidden; display: flex; flex-direction: column; }
.colhead { height: 20px; flex: none; display: grid; grid-template-columns: 25px var(--cols); border-bottom: 1px solid #a6a6a6; color: #f2f2f2; font: 13px/19px var(--cell); text-align: center; }
.colhead > div { border-right: 1px solid #c4c4c4; }
.colhead .clip { border-right: 0; text-align: left; padding-left: 24px; overflow: hidden; }
.colhead .corner { border-right: 1px solid #2a2a2a; display: flex; align-items: center; justify-content: center; padding-left: 7px; }
.gridbody { flex: 1; display: flex; min-height: 0; }
.rownums { width: 25px; flex: none; color: #f2f2f2; font: 13px/20px var(--cell); text-align: center; }
.rownums > div { height: 20px; border-bottom: 1px solid #6e6e6e; border-right: 1px solid #2f2f2f; }
.cells { flex: 1; background: #fff; display: grid; grid-template-columns: var(--cols); grid-auto-rows: 20px; color: #161616; font: 13.8px/20px var(--cell); text-align: center; white-space: nowrap; }
.cells > div { border-right: 1px solid #dcdcdc; border-bottom: 1px solid #dcdcdc; }
.cells > div.num { letter-spacing: -.45px; padding-left: 2px; }
.cells > div.strip { grid-row: span 37; border-bottom: 0; background: repeating-linear-gradient(to bottom, #fff 0 19px, #dcdcdc 19px 20px); }
.cells > div.rest { grid-row: span 29; border-bottom: 0; background: repeating-linear-gradient(to bottom, #fff 0 19px, #dcdcdc 19px 20px); }
.cells > div.green { background: #92d050; border-color: #92d050; }
.cells > div.amber { background: #ffc000; border-color: #ffc000; }
.vscroll { flex: 1; display: flex; flex-direction: column; align-items: center; padding: 0 3px 0 2px; background: linear-gradient(#424242, #424242) no-repeat 2px 0 / 17px 100%; }
.arrow { width: 10px; height: 8px; margin: 5px 0 4px; }
.vthumb { flex: 1; width: 9px; background: #c4c4c4; border-radius: 5px; }

/* sheet tabs */
.sheetbar { height: 32px; flex: none; display: flex; align-items: flex-start; border-bottom: 1px solid #3a3a3a; padding-left: 28px; }
.navarrow { width: 8px; height: 12px; margin-top: 9px; }
.sheettab { width: 49px; height: 27px; margin-left: 48px; background: #fff; border-radius: 0 0 4px 4px; color: #222; font-weight: 700; font-size: 13px; text-align: center; position: relative; line-height: 26px; }
.sheettab span { display: inline-block; border-bottom: 2px solid #107c41; height: 25px; }
.tabsep { width: 1px; height: 18px; margin: 6px 0 0 4px; background: #6c6c6c; }
.plus { width: 12px; height: 12px; margin: 9px 0 0 42px; }
.tabdots { margin: 4px 0 0 924px; width: 8px; color: #d8d8d8; font-size: 14px; line-height: 18px; text-align: center; }
.hscroll { width: 728px; height: 17px; margin: 7px 0 0 18px; background: #3f3f3f; border-radius: 9px; display: flex; align-items: center; padding: 0 4px 0 2px; }
.harrow { width: 7px; height: 10px; }
.hthumb { width: 661px; height: 9px; margin: 0 41px 0 5px; background: #c4c4c4; border-radius: 5px; }

/* status */
.status { height: 22px; flex: none; display: flex; align-items: center; padding-left: 13px; color: #f0f0f0; font-size: 11px; }
.ready { width: 41px; }
.access { margin-right: 2px; }
.status-right { margin-left: auto; display: flex; align-items: center; height: 100%; padding-right: 8px; }
.view { width: 40px; height: 100%; display: flex; align-items: center; justify-content: center; }
.view.on { background: #5f5f5f; }
.zoombtn { width: 9px; height: 9px; margin: 0 4px 0 7px; }
.plus-z { margin: 0 5px 0 5px; }
.slider { width: 100px; height: 1px; background: #e8e8e8; position: relative; }
.knob { position: absolute; left: 48px; top: -7px; width: 5px; height: 15px; background: #bdbdbd; }
.zoomval { margin-left: 6px; font-size: 11px; white-space: nowrap; }

/* taskbar */
.taskbar { height: 48px; flex: none; display: flex; align-items: center; background: linear-gradient(90deg, #e0ecf8 0%, #dfe8f7 30%, #d9e1f5 50%, #d3dbf2 65%, #dde8f7 82%, #e3eef9 100%); border-top: 1px solid #c6ccd6; color: #222; font-size: 11px; padding: 0 0 1px 19px; }
.weather { width: 554px; display: flex; align-items: center; gap: 8px; flex: none; }
.wtext { line-height: 16px; }
.wsub { color: #555; }
.winlogo { width: 24px; height: 24px; }
.tsearch { width: 218px; height: 30px; margin-left: 13px; background: #f3f6fb; border: 1px solid #cdd5e4; border-radius: 15px; display: flex; align-items: center; gap: 9px; padding-left: 10px; color: #444; font-size: 12.5px; flex: none; }
.apps { display: flex; margin-left: 2px; flex: none; }
.app-i { width: 44px; height: 46px; display: flex; align-items: center; justify-content: center; position: relative; }
.dot::after { content: ""; position: absolute; left: 19px; bottom: 3px; width: 6px; height: 3px; border-radius: 2px; background: #6f7785; }
.tray { flex: 1; display: flex; align-items: center; justify-content: flex-end; padding-right: 20px; }
.clock { margin-left: 18px; text-align: right; line-height: 16px; color: #222; font-size: 11.5px; }
```
